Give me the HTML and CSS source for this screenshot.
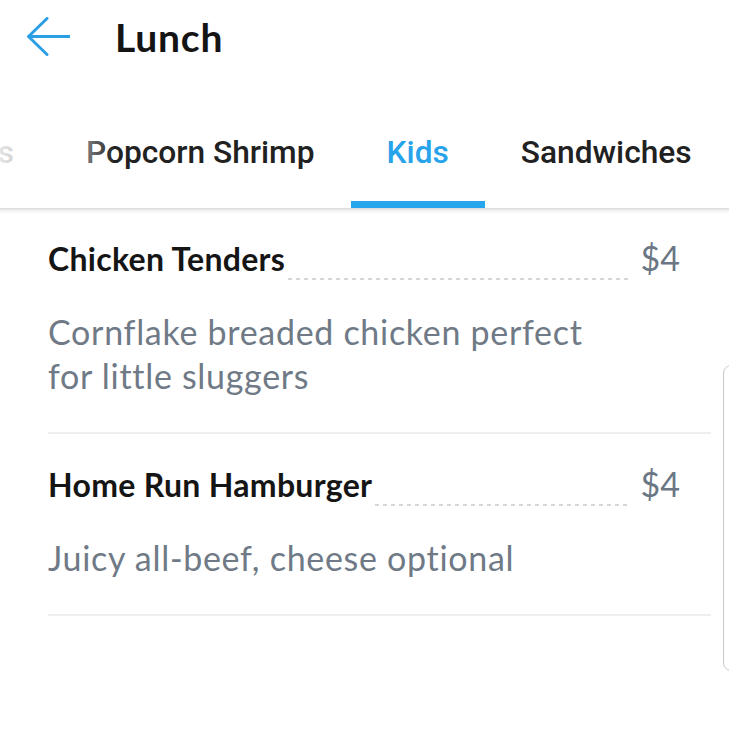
FILE: index.html
```html
<!DOCTYPE html>
<html lang="en">
<head>
<meta charset="utf-8">
<title>Lunch</title>
<link rel="stylesheet" href="styles.css">
</head>
<body>
<div class="screen">
  <header class="header">
    <svg class="back" width="44" height="40" viewBox="0 0 44 40" aria-hidden="true">
      <path d="M2.5 19.5 H44 M2.5 19.5 L21 1.5 M2.5 19.5 L21 37.5" fill="none" stroke="#2b9fe6" stroke-width="3" stroke-linecap="round" stroke-linejoin="round"/>
    </svg>
    <h1 class="title">Lunch</h1>
  </header>

  <nav class="tabs">
    <div class="tab tab-cut"><span>Salads</span></div>
    <div class="tab"><span>Popcorn Shrimp</span></div>
    <div class="tab active"><span>Kids</span></div>
    <div class="tab"><span>Sandwiches</span></div>
    <div class="fade"></div>
  </nav>

  <main class="menu">
    <section class="item">
      <div class="item-row">
        <span class="item-name">Chicken Tenders</span>
        <span class="leader"></span>
        <span class="price">$4</span>
      </div>
      <p class="desc">Cornflake breaded chicken perfect<br>for little sluggers</p>
    </section>
    <section class="item">
      <div class="item-row">
        <span class="item-name">Home Run Hamburger</span>
        <span class="leader"></span>
        <span class="price">$4</span>
      </div>
      <p class="desc">Juicy all-beef, cheese optional</p>
    </section>
  </main>

  <div class="edge-panel"></div>
</div>
</body>
</html>
```

FILE: styles.css
```css
* { box-sizing: border-box; }

html, body {
  margin: 0;
  padding: 0;
  background: #ffffff;
}

.screen {
  position: relative;
  width: 729px;
  height: 750px;
  overflow: hidden;
  background: #ffffff;
  font-family: "Lato", "Open Sans", sans-serif;
}

.header {
  height: 76px;
  display: flex;
  align-items: center;
  padding-left: 26px;
}

.back {
  display: block;
  flex: none;
  margin-top: -2px;
}

.title {
  margin: -3px 0 0 45px;
  font-family: "Lato", sans-serif;
  font-weight: 700;
  font-size: 39px;
  color: #141414;
  letter-spacing: 0.8px;
}

.tabs {
  position: relative;
  height: 132px;
  display: flex;
  overflow: hidden;
  background: #ffffff;
}

.tab {
  flex: none;
  height: 132px;
  padding: 58px 36px 0;
  border-bottom: 7px solid transparent;
  font-family: "Roboto", sans-serif;
  font-weight: 500;
  font-size: 31.7px;
  line-height: 38px;
  color: #212121;
  white-space: nowrap;
}

.tab-cut {
  width: 50px;
  padding-left: 0;
  display: flex;
  justify-content: flex-end;
}

.tab-cut span { flex: none; }

.tab.active {
  color: #27a3ec;
  border-bottom-color: #27a6ee;
}

.fade {
  position: absolute;
  left: 0;
  top: 0;
  width: 115px;
  height: 100%;
  background: linear-gradient(to right, rgba(255,255,255,0.88) 0, rgba(255,255,255,0.5) 80px, rgba(255,255,255,0) 115px);
  pointer-events: none;
}

.menu {
  position: relative;
  padding: 0 18px 0 48px;
}

.menu::before {
  content: "";
  position: absolute;
  left: 0;
  right: 0;
  top: 0;
  height: 6px;
  background: linear-gradient(to bottom, rgba(0,0,0,0.16), rgba(0,0,0,0.06) 2px, rgba(0,0,0,0));
}

.item {
  padding: 29px 0 34px;
  border-bottom: 2px solid #eeeeee;
}

.item-row {
  display: flex;
  align-items: baseline;
  padding-right: 31px;
}

.item-name {
  font-weight: 700;
  font-size: 32px;
  letter-spacing: 0.3px;
  color: #151515;
  white-space: nowrap;
}

.leader {
  flex: 1;
  align-self: flex-end;
  height: 2px;
  margin: 0 13px -2px 3px;
  background: repeating-linear-gradient(to right, #d3d6da 0 4px, transparent 4px 8px);
}

.price {
  font-weight: 400;
  font-size: 34px;
  color: #6b7784;
}

.desc {
  margin: 32px 0 0;
  font-size: 34px;
  letter-spacing: 0.7px;
  line-height: 44px;
  color: #6f7a86;
}

.edge-panel {
  position: absolute;
  left: 723px;
  top: 365px;
  width: 20px;
  height: 306px;
  border: 1px solid #c9c9c9;
  border-radius: 8px;
  background: #ffffff;
}
```
